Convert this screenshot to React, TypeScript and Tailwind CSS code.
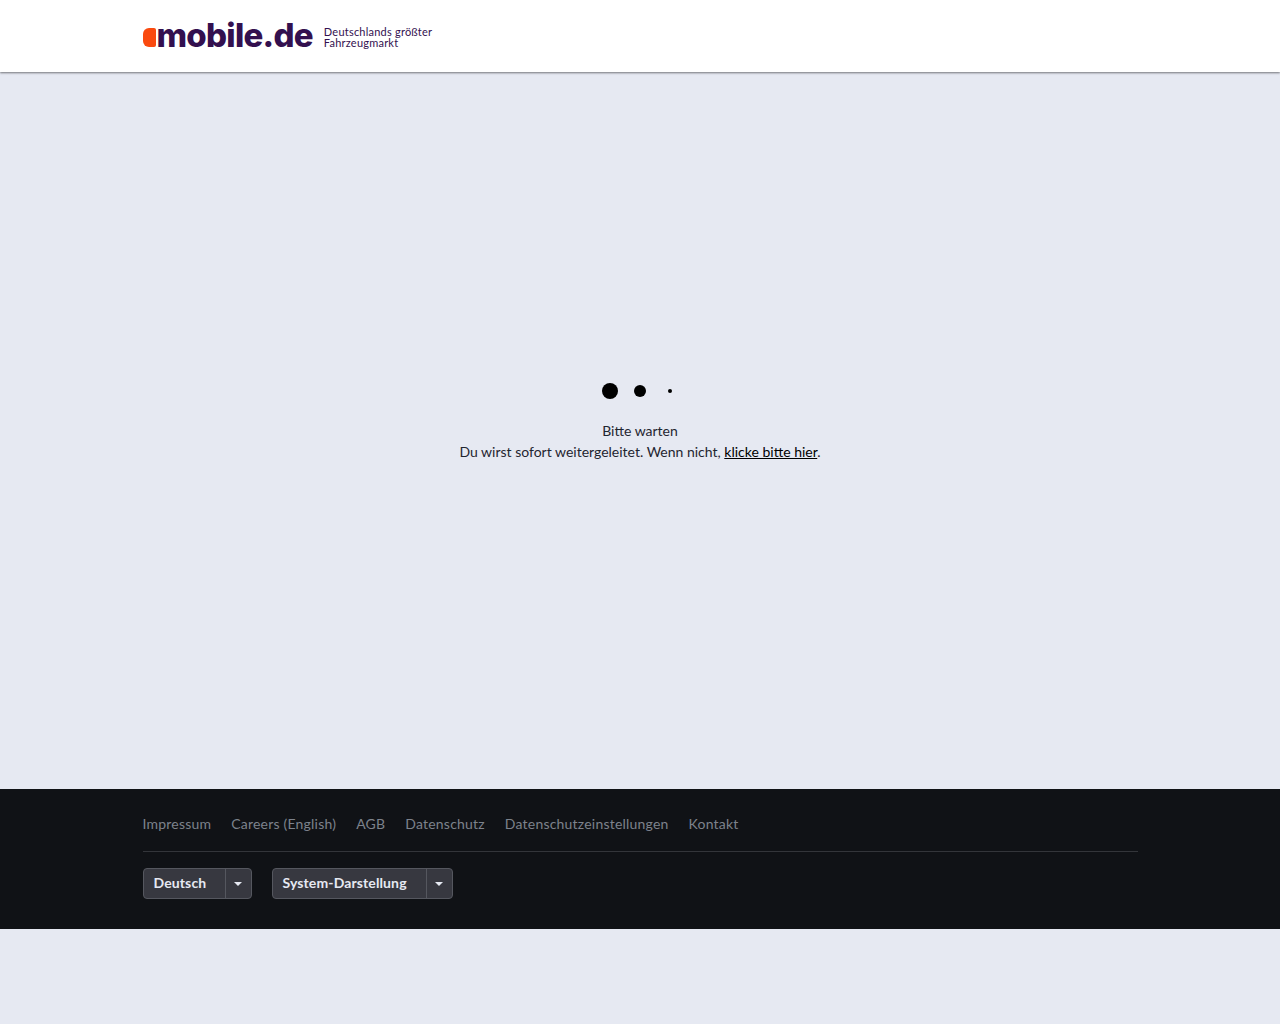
const fontStack = { fontFamily: "Lato, 'Open Sans', sans-serif" };

const footerLinks = ["Impressum", "Careers (English)", "AGB", "Datenschutz", "Datenschutzeinstellungen", "Kontakt"];

function SelectButton({ label, labelWidth }: { label: string; labelWidth: string }) {
  return (
    <div className="flex h-[31px] items-stretch rounded-[4px] border border-[#55575f] bg-[#373840] text-[#e6e9f2]">
      <span className={`flex items-center pb-[2px] pl-[10px] text-[14px] font-bold tracking-[0.12px] ${labelWidth}`}>{label}</span>
      <span className="flex w-[26px] items-center justify-center border-l border-[#55575f]">
        <svg width="8" height="4" viewBox="0 0 8 4">
          <path d="M0 0h8L4 4z" fill="#e6e9f2" />
        </svg>
      </span>
    </div>
  );
}

export default function App() {
  return (
    <div className="min-h-screen bg-[#e6e9f2] text-[#1f2530]" style={fontStack}>
      <header className="h-[72px] bg-white shadow-[0_1px_2px_rgba(0,0,0,0.5)]">
        <div className="mx-auto flex h-full w-[995px] items-center">
          <div className="mt-[3px] h-[19px] w-[13px] rounded-l-[6px] rounded-r-[2px] bg-[#fa4a0f]" />
          <span
            className="ml-[1px] pb-[1px] text-[33px] leading-none font-extrabold tracking-[-0.75px] text-[#33104f]"
            style={{ fontFamily: "Inter, sans-serif" }}
          >
            mobile.de
          </span>
          <div className="ml-[11px] mt-[1px] text-[11px] leading-[11px] tracking-[0.22px] text-[#33104f]">
            <div>Deutschlands größter</div>
            <div>Fahrzeugmarkt</div>
          </div>
        </div>
      </header>

      <main className="flex h-[717px] flex-col items-center pt-[304px]">
        <div className="flex h-[30px] items-center">
          <span className="flex w-[30px] justify-center">
            <span className="h-4 w-4 rounded-full bg-black" />
          </span>
          <span className="flex w-[30px] justify-center">
            <span className="h-3 w-3 rounded-full bg-black" />
          </span>
          <span className="flex w-[30px] justify-center">
            <span className="h-1 w-1 rounded-full bg-black" />
          </span>
        </div>
        <p className="mt-[14px] text-center text-[14px] leading-[21px]">
          Bitte warten
          <br />
          Du wirst sofort weitergeleitet. Wenn nicht,{" "}
          <a href="#" className="text-black underline">
            klicke bitte hier
          </a>
          .
        </p>
      </main>

      <footer className="h-[140px] bg-[#101216]">
        <div className="mx-auto w-[995px]">
          <nav className="flex h-[63px] items-center gap-5 border-b border-[#33353a] pt-[7px] text-[14px] tracking-[0.21px] text-[#7d828c]">
            {footerLinks.map((link) => (
              <a key={link} href="#">
                {link}
              </a>
            ))}
          </nav>
          <div className="mt-4 flex gap-5">
            <SelectButton label="Deutsch" labelWidth="w-[81px]" />
            <SelectButton label="System-Darstellung" labelWidth="w-[153px]" />
          </div>
        </div>
      </footer>
    </div>
  );
}
